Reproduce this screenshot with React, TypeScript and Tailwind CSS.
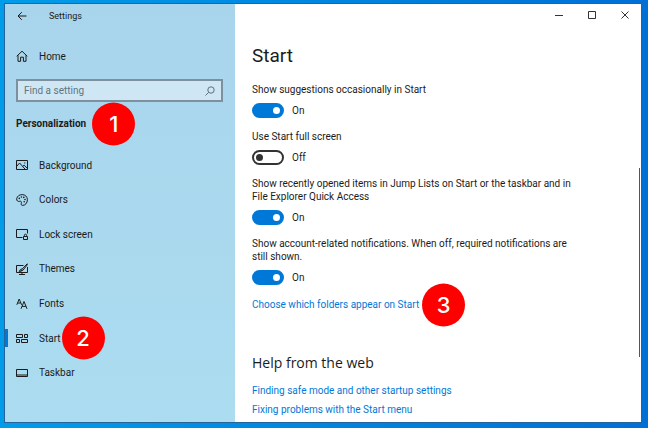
import React, { useState } from 'react';
import clsx from 'clsx';

const iconProps = {
  viewBox: '0 0 12 12',
  fill: 'none',
  stroke: 'currentColor',
  className: 'size-3 shrink-0',
  'aria-hidden': true,
};

const HomeIcon = () => (
  <svg {...iconProps}>
    <path d="M.7 6.3 6 1.2l5.3 5.1M2 5.3v6h2.6V7.2h2.8v4.1H10v-6" />
  </svg>
);

const BackgroundIcon = () => (
  <svg {...iconProps}>
    <path d="M.5 1.5h11v9H.5zM.5 7.5 3.6 4l5.7 6.4M6.8 7.4l1.3-1.2 3.3 3.2" />
    <circle cx="8.8" cy="3.9" r=".6" fill="currentColor" stroke="none" />
  </svg>
);

const ColorsIcon = () => (
  <svg {...iconProps}>
    <path d="M.7 4.6C1.2 2.1 3.5.6 6.2.6c3 0 5.2 2.2 5.2 5.1 0 3.2-2.2 5.7-4.7 5.7-1.5 0-1.8-1-1.4-2.1.5-1.4-.3-2.4-1.5-2C2.3 7.8.3 7 .7 4.6Z" />
    <g fill="currentColor" stroke="none">
      <circle cx="3.3" cy="4.4" r=".8" />
      <circle cx="5.4" cy="3" r=".8" />
      <circle cx="7.8" cy="3.4" r=".8" />
      <circle cx="9" cy="5.5" r=".8" />
      <circle cx="8.2" cy="7.8" r=".8" />
    </g>
  </svg>
);

const LockScreenIcon = () => (
  <svg {...iconProps}>
    <path d="M6.5 9.5h-6v-8h11v4" />
    <path d="M7.5 8.5h4v3h-4zM8.4 8.5V7.3a1.1 1.1 0 0 1 2.2 0v1.2" />
  </svg>
);

const ThemesIcon = () => (
  <svg {...iconProps}>
    <path d="M7.5 2.5h-7v7h11V4M3 11.500h6M6 9.500v2" />
    <path d="M11.4.6 6.2 6l-1.5 2.3L7 7.2l4.7-5.9M4.7 8.3l-1.5.2 1-1.7 1.500-1" />
  </svg>
);

const FontsIcon = () => (
  <svg {...iconProps}>
    <path d="M.8 6.8 3.2 1l2.4 5.8M1.7 5h3M5 10.8l3-7.3 3 7.3M6.100 8.400h3.800" />
  </svg>
);

const StartIcon = () => (
  <svg {...iconProps}>
    <path d="M.5 2.5h6v3h-6zM8.5 2.5h3v3h-3zM.5 7.5h3v3h-3zM5.500 7.500h6v3h-6z" />
  </svg>
);

const TaskbarIcon = () => (
  <svg {...iconProps}>
    <path d="M.5 2.5h11v7H.5zM.5 8h11" />
  </svg>
);

const navItems = [
  { label: 'Background', icon: BackgroundIcon },
  { label: 'Colors', icon: ColorsIcon },
  { label: 'Lock screen', icon: LockScreenIcon },
  { label: 'Themes', icon: ThemesIcon },
  { label: 'Fonts', icon: FontsIcon },
  { label: 'Start', icon: StartIcon, active: true, step: 2 },
  { label: 'Taskbar', icon: TaskbarIcon },
];

const settings = [
  { id: 'suggestions', label: 'Show suggestions occasionally in Start', on: true },
  { id: 'full-screen', label: 'Use Start full screen', on: false },
  {
    id: 'recent-items',
    label: 'Show recently opened items in Jump Lists on Start or the taskbar and in File Explorer Quick Access',
    on: true,
  },
  {
    id: 'account',
    label: 'Show account-related notifications. When off, required notifications are still shown.',
    on: true,
  },
];

const StepBadge = ({ step, className }: { step: number; className?: string }) => (
  <span
    className={clsx(
      'absolute top-1/2 left-full flex size-[43px] -translate-y-1/2 items-center justify-center rounded-full bg-[#fe0000] font-[Inter,sans-serif] text-[22px] font-medium text-white',
      className,
    )}
  >
    {step}
  </span>
);

const Toggle = ({ id, label, on }: { id: string; label: string; on: boolean }) => {
  const [checked, setChecked] = useState(on);

  return (
    <div>
      <label htmlFor={id} className="block">
        {label}
      </label>
      <div className="mt-[7px] flex items-center gap-2">
        <input
          id={id}
          type="checkbox"
          role="switch"
          checked={checked}
          onChange={(e) => setChecked(e.target.checked)}
          className="flex h-[15px] w-8 appearance-none items-center rounded-full border-2 border-[#333] px-[2px] before:size-[7px] before:rounded-full before:bg-[#333] checked:justify-end checked:border-[#0078d7] checked:bg-[#0078d7] checked:before:bg-white"
        />
        <span>{checked ? 'On' : 'Off'}</span>
      </div>
    </div>
  );
};

const Sidebar = () => (
  <aside className="flex w-[230px] shrink-0 flex-col bg-linear-to-b from-[#a9d5ec] to-[#abdcf0]">
    <header className="flex h-6 items-center gap-[22px] px-3">
      <button type="button" aria-label="Back">
        <svg viewBox="0 0 10 10" fill="none" stroke="currentColor" className="size-[10px]">
          <path d="M9.5 5H1M4.8 1.2 1 5l3.8 3.8" />
        </svg>
      </button>
      <span className="text-[9px]">Settings</span>
    </header>

    <a href="#home" className="mt-4 flex h-6 items-center gap-[11px] px-[11px]">
      <HomeIcon />
      Home
    </a>

    <div className="mr-3 ml-[11px] mt-[11px] flex h-[23px] items-center border-2 border-[#7c919d] bg-[#cfe7f4] px-[6px]">
      <input
        type="text"
        aria-label="Find a setting"
        placeholder="Find a setting"
        className="min-w-0 flex-1 outline-none placeholder:text-[#5f7581]"
      />
      <svg viewBox="0 0 10 10" fill="none" stroke="#5b707c" className="size-[10px]" aria-hidden="true">
        <circle cx="6" cy="4" r="3.2" />
        <path d="M3.7 6.3.5 9.5" />
      </svg>
    </div>

    <h2 className="relative mt-[15px] ml-[11px] w-fit font-bold">
      Personalization
      <StepBadge step={1} className="ml-[6px]" />
    </h2>

    <nav className="mt-[26px] mb-10 flex flex-1 flex-col justify-between">
      {navItems.map(({ label, icon: Icon, active, step }) => (
        <a
          key={label}
          href={`#${label}`}
          className={clsx(
            'flex h-[18px] items-center gap-[11px] border-l-3 pl-2',
            active ? 'border-[#0078d7]' : 'border-transparent',
          )}
        >
          <Icon />
          <span className="relative">
            {label}
            {step && <StepBadge step={step} className="ml-px" />}
          </span>
        </a>
      ))}
    </nav>
  </aside>
);

const WindowControls = () => (
  <div className="flex h-6 items-center justify-end gap-[23px] pr-[11px] text-[#333]">
    <button type="button" aria-label="Minimize">
      <svg viewBox="0 0 10 10" stroke="currentColor" className="size-[10px]">
        <path d="M1 4.5h8" />
      </svg>
    </button>
    <button type="button" aria-label="Maximize">
      <svg viewBox="0 0 10 10" fill="none" stroke="currentColor" className="size-[10px]">
        <path d="M1.5.5h7v7h-7z" />
      </svg>
    </button>
    <button type="button" aria-label="Close">
      <svg viewBox="0 0 10 10" stroke="currentColor" className="size-[10px]">
        <path d="m1.5.5 7 7M8.500.5l-7 7" />
      </svg>
    </button>
  </div>
);

export default function App() {
  return (
    <div className="flex min-h-screen bg-linear-to-r from-[#009ce9] to-[#006fd6] pt-[3px] pr-[6px] pb-[5px] pl-1 font-[Roboto,sans-serif] text-[10px] leading-[13px] text-[#1b1b1b]">
      <div className="flex flex-1 border border-[#24649a] bg-white">
        <Sidebar />

        <main className="flex min-w-0 flex-1 flex-col">
          <WindowControls />
          <div className="flex flex-1">
            <div className="min-w-0 flex-1 pr-[60px] pl-[17px]">
              <h1 className="mt-4 text-[19px] leading-6">Start</h1>
              <div className="mt-[15px] space-y-3">
                {settings.map((setting) => (
                  <Toggle key={setting.id} {...setting} />
                ))}
              </div>
              <p className="relative mt-[13px] w-fit text-[#0078d7]">
                <a href="#folders">Choose which folders appear on Start</a>
                <StepBadge step={3} className="ml-[3px]" />
              </p>

              <h2 className="mt-[42px] font-['Open_Sans',sans-serif] text-sm leading-5">Help from the web</h2>
              <ul className="mt-[11px] space-y-[6px] text-[#0078d7]">
                <li>
                  <a href="#safe-mode">Finding safe mode and other startup settings</a>
                </li>
                <li>
                  <a href="#start-menu">Fixing problems with the Start menu</a>
                </li>
              </ul>
            </div>
            <div className="mt-[140px] mr-px h-[189px] w-px bg-[#555]" />
          </div>
        </main>
      </div>
    </div>
  );
}
